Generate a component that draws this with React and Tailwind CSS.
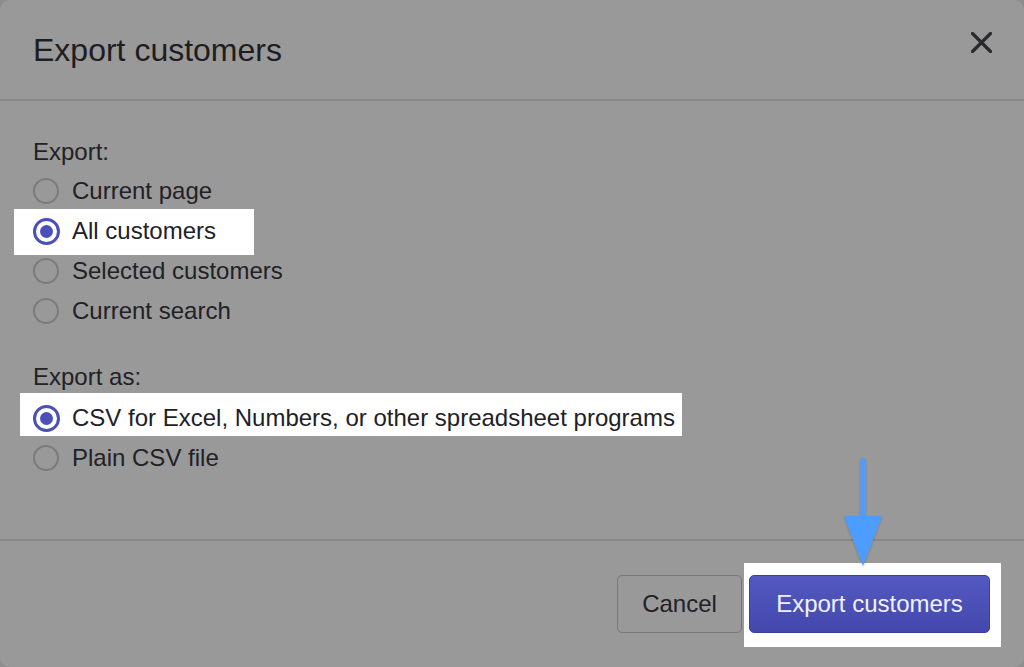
import React from "react";

function Radio({ checked }) {
  if (checked) {
    return (
      <span className="flex h-[27px] w-[27px] shrink-0 items-center justify-center rounded-full border-[3px] border-[#4b50b8] bg-white">
        <span className="h-[13px] w-[13px] rounded-full bg-[#4b50b8]" />
      </span>
    );
  }
  return (
    <span className="block h-[26px] w-[26px] shrink-0 rounded-full border-2 border-[#7b7b7b] bg-[#999999]" />
  );
}

function Row({ label, checked, highlight }) {
  return (
    <div className="relative flex h-[40px] items-center">
      {highlight === "all" && (
        <span className="absolute left-[-19px] top-[-2px] h-[46px] w-[240px] bg-white" />
      )}
      {highlight === "csv" && (
        <span className="absolute left-[-13px] top-[-5px] h-[43px] w-[662px] bg-white" />
      )}
      <div className="relative flex items-center">
        <div className="flex w-[26px] items-center justify-center">
          <Radio checked={checked} />
        </div>
        <span className="ml-[13px] text-[24px] leading-[24px] text-[#212126]">{label}</span>
      </div>
    </div>
  );
}

export default function App() {
  return (
    <div
      className="h-[667px] w-[1024px] overflow-hidden bg-[#8d8d8d]"
      style={{ fontFamily: '"Liberation Sans", Arial, sans-serif' }}
    >
      <div className="flex h-full flex-col rounded-[10px] bg-[#999999]">
        <header className="flex h-[101px] shrink-0 items-center justify-between border-b-2 border-[#878787] pl-[33px] pr-[32px]">
          <h1 className="text-[32px] leading-[32px] text-[#1d1d22]">Export customers</h1>
          <button className="mb-[14px] flex h-[22px] w-[22px] items-center justify-center">
            <svg width="21" height="21" viewBox="0 0 21 21">
              <path d="M1.5 1.5 L19.5 19.5 M19.5 1.5 L1.5 19.5" stroke="#2a2a2e" strokeWidth="3.2" strokeLinecap="round" />
            </svg>
          </button>
        </header>

        <main className="flex-1 pl-[33px] pt-[39px]">
          <div className="text-[24px] leading-[24px] text-[#212126]">Export:</div>
          <div className="mt-[7px] flex flex-col">
            <Row label="Current page" />
            <Row label="All customers" checked highlight="all" />
            <Row label="Selected customers" />
            <Row label="Current search" />
          </div>
          <div className="mt-[34px] text-[24px] leading-[24px] text-[#212126]">Export as:</div>
          <div className="mt-[9px] flex flex-col">
            <Row label="CSV for Excel, Numbers, or other spreadsheet programs" checked highlight="csv" />
            <Row label="Plain CSV file" />
          </div>
        </main>

        <footer className="flex h-[128px] shrink-0 items-start justify-end gap-[7px] border-t-2 border-[#878787] pr-[34px] pt-[34px]">
          <button className="h-[58px] w-[125px] rounded-[5px] border-[1.5px] border-[#777777] bg-[#999999] text-[24px] text-[#212126]">
            Cancel
          </button>
          <div className="relative">
            <span className="absolute left-[-5px] top-[-12px] h-[84px] w-[257px] bg-white" />
            <button className="relative h-[58px] w-[241px] rounded-[5px] border border-[#3c3f9e] bg-gradient-to-b from-[#5359c0] to-[#4448ad] text-[24px] text-[#f2f2ff]">
              Export customers
            </button>
            <svg
              className="absolute left-[93px] top-[-119px]"
              width="42"
              height="114"
              viewBox="0 0 42 114"
            >
              <defs>
                <filter id="sh" x="-50%" y="-20%" width="200%" height="140%">
                  <feDropShadow dx="0" dy="1" stdDeviation="1.2" floodColor="#000" floodOpacity="0.25" />
                </filter>
              </defs>
              <g filter="url(#sh)">
                <rect x="18.5" y="2" width="5" height="62" rx="2" fill="#4e9cff" />
                <path d="M2 60 L40 60 L21 110 Z" fill="#4e9cff" />
              </g>
            </svg>
          </div>
        </footer>
      </div>
    </div>
  );
}
